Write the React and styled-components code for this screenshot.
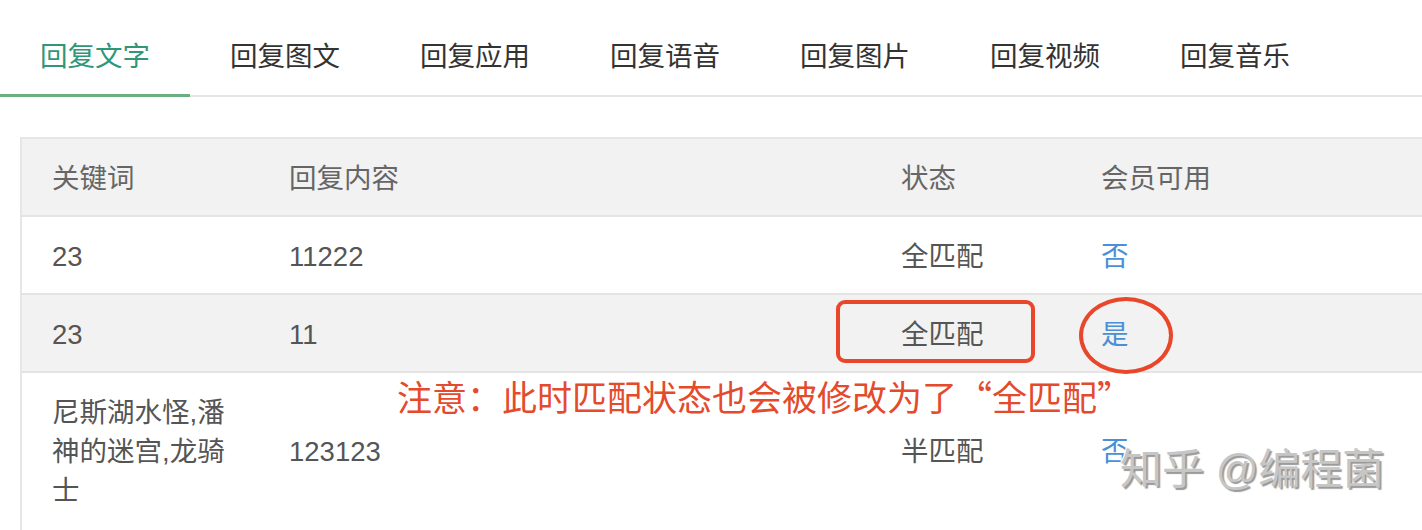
import styled, { createGlobalStyle } from "styled-components";

const GlobalStyle = createGlobalStyle`
    body {
        margin: 0;
        background: #fff;
        font-family: "Liberation Sans", "Noto Sans CJK SC", sans-serif;
    }
`;

const tabs = ['回复文字', '回复图文', '回复应用', '回复语音', '回复图片', '回复视频', '回复音乐'];

const rows = [
    { keyword: '23', content: '11222', status: '全匹配', member: '否' },
    { keyword: '23', content: '11', status: '全匹配', member: '是' },
    { keyword: '尼斯湖水怪,潘神的迷宫,龙骑士', content: '123123', status: '半匹配', member: '否' },
];

const App = () => {
    return (
        <Page>
            <GlobalStyle />
            <TabBar>
                {tabs.map((t, i) => (
                    <Tab key={t} $active={i === 0}>{t}</Tab>
                ))}
            </TabBar>

            <Table>
                <colgroup>
                    <col style={{ width: 238 }} />
                    <col style={{ width: 612 }} />
                    <col style={{ width: 200 }} />
                    <col />
                </colgroup>
                <thead>
                    <tr>
                        <Th>关键词</Th>
                        <Th>回复内容</Th>
                        <Th>状态</Th>
                        <Th>会员可用</Th>
                    </tr>
                </thead>
                <tbody>
                    {rows.map((r, i) => (
                        <Row key={i} $striped={i % 2 === 1}>
                            <Td>{r.keyword}</Td>
                            <Td>{r.content}</Td>
                            <Td>{r.status}</Td>
                            <Td><Flag>{r.member}</Flag></Td>
                        </Row>
                    ))}
                </tbody>
            </Table>

            {/* red markup drawn over the screenshot */}
            <MarkBox />
            <MarkCircle />
            <Note>注意：此时匹配状态也会被修改为了“全匹配”</Note>
            <Watermark>知乎 @编程菌</Watermark>
        </Page>
    )
}

export default App;

const Page = styled.div`
    position: relative;
    width: 1422px;
    height: 530px;
    overflow: hidden;
`

const TabBar = styled.div`
    display: flex;
    height: 95px;
    border-bottom: 2px solid #e4e4e4;
`

const Tab = styled.div`
    box-sizing: border-box;
    width: 190px;
    height: 97px;
    margin-bottom: -2px;
    padding: 14px 40px 0;
    display: flex;
    align-items: center;
    font-size: 27.5px;
    color: ${p => p.$active ? '#2f9677' : '#333'};
    border-bottom: 3px solid ${p => p.$active ? '#6aaf81' : 'transparent'};
`

const Table = styled.table`
    margin: 40px 0 0 20px;
    width: 1402px;
    border-collapse: collapse;
    table-layout: fixed;
    border-top: 2px solid #e6e6e6;
    border-left: 2px solid #e6e6e6;
`

const Th = styled.th`
    background: #f2f2f2;
    text-align: left;
    font-weight: normal;
    font-size: 27.5px;
    line-height: 39px;
    color: #666;
    padding: 20px 32px 17px 30px;
    border-bottom: 2px solid #e4e4e4;
`

const Row = styled.tr`
    background: ${p => p.$striped ? '#f2f2f2' : '#fff'};
`

const Td = styled.td`
    font-size: 27.5px;
    line-height: 39px;
    color: #555;
    padding: 20px 32px 17px 30px;
    border-bottom: 2px solid #e4e4e4;
    vertical-align: middle;
    tr:last-child > & {
        padding-bottom: 22px;
    }
`

const Flag = styled.span`
    color: #4a90d6;
`

const MarkBox = styled.div`
    position: absolute;
    left: 836px;
    top: 300px;
    width: 199px;
    height: 63px;
    box-sizing: border-box;
    border: 4px solid #e8472b;
    border-radius: 9px;
`

const MarkCircle = styled.div`
    position: absolute;
    left: 1079px;
    top: 297px;
    width: 94px;
    height: 77px;
    box-sizing: border-box;
    border: 4px solid #e8472b;
    border-radius: 50%;
`

const Note = styled.div`
    position: absolute;
    left: 397px;
    top: 374px;
    font-family: "Noto Sans CJK SC", sans-serif;
    font-size: 35px;
    line-height: 44px;
    color: #e44a2c;
    white-space: nowrap;
`

const Watermark = styled.div`
    position: absolute;
    left: 1120px;
    top: 444px;
    font-size: 42px;
    line-height: 52px;
    color: #c6c6c6;
    white-space: nowrap;
    text-shadow: 2px 2px 1px #9a9a9a, -1px -1px 0 #fff;
`
